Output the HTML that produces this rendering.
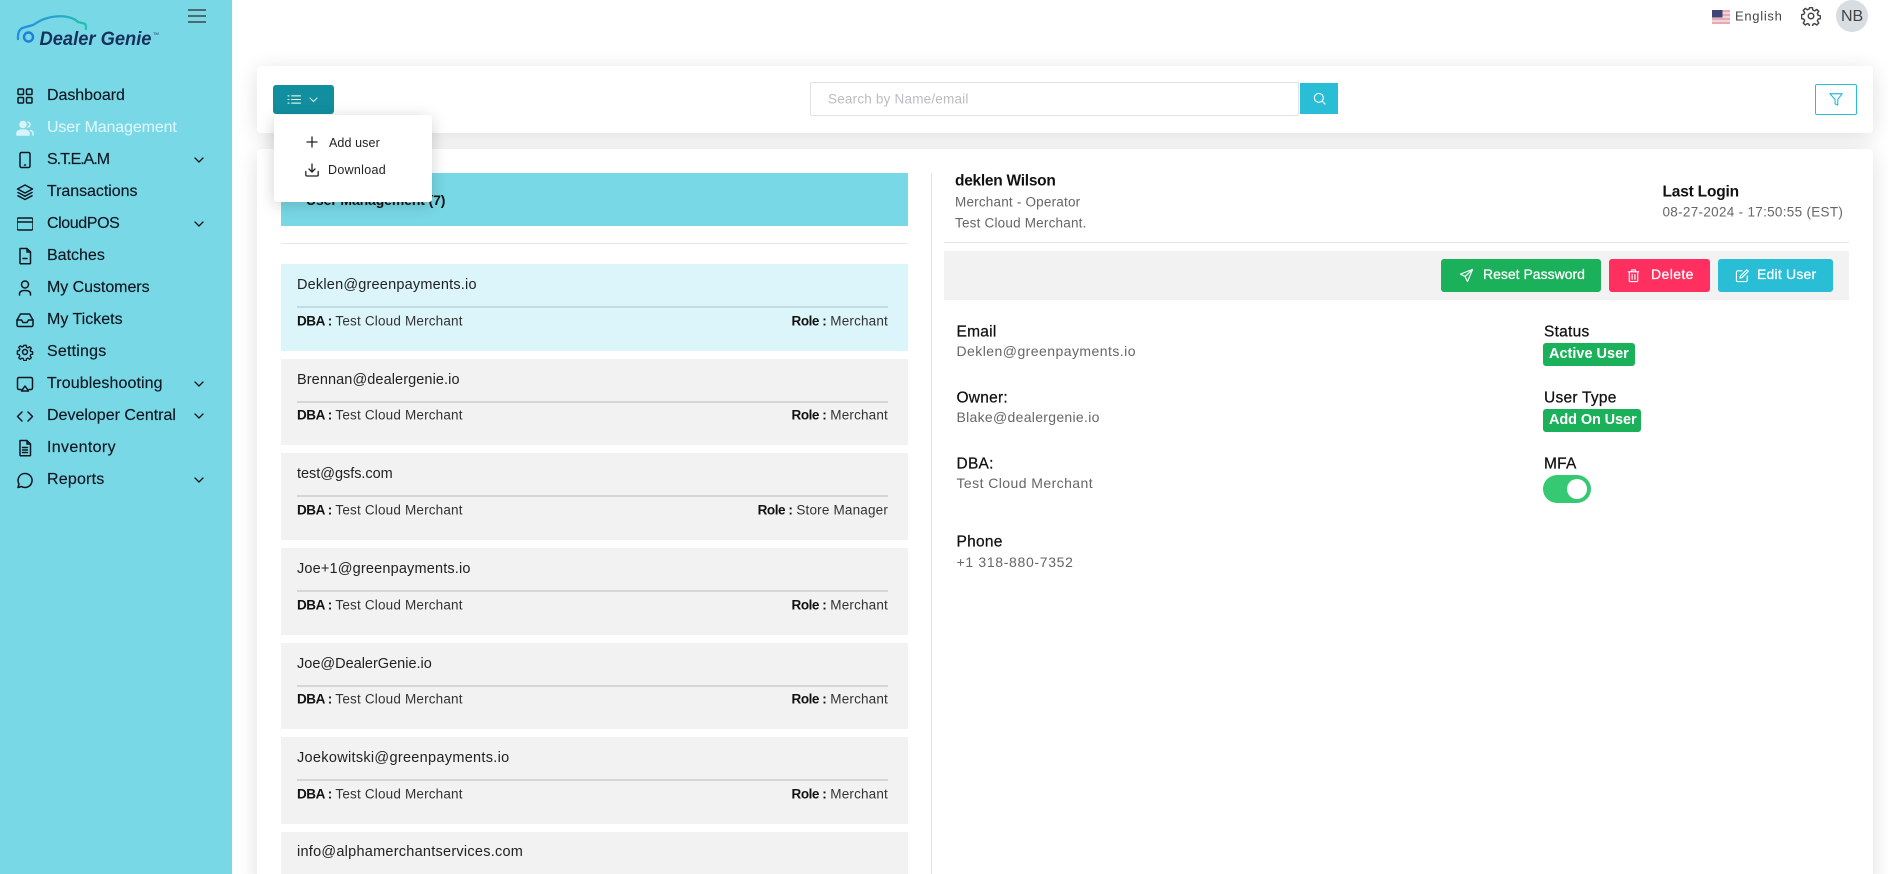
<!DOCTYPE html>
<html><head><meta charset="utf-8"><title>User Management</title>
<style>
*{box-sizing:border-box}
html,body{margin:0;padding:0;width:1888px;height:874px;overflow:hidden;background:#fff;font-family:"Liberation Sans",sans-serif;color:#111}
#wrap{position:relative;width:1888px;height:874px;overflow:hidden;background:#fff}
.a{position:absolute}
.t{position:absolute;white-space:nowrap;line-height:1;transform:translateY(-50%)}
#side{left:0;top:0;width:232px;height:874px;background:#78d8e6}
.nav{font-size:16px;left:47px;color:#0f1720;-webkit-text-stroke:.15px #0f1720}
.ic{position:absolute;left:16px;width:18px;height:18px;fill:none;stroke:#0f1720;stroke-width:1.5;stroke-linecap:round;stroke-linejoin:round}
.chev{position:absolute;left:194px;width:10px;height:6px;fill:none;stroke:#0f1720;stroke-width:1.3;stroke-linecap:round;stroke-linejoin:round}
.card{background:#fff;border-radius:4px;box-shadow:0 4px 22px rgba(0,0,0,.13)}
.item{position:absolute;left:281px;width:627px;background:#f2f2f2}
.item.on{background:#dbf5fa}
.item i{position:absolute;left:16px;right:20px;top:42px;height:2px;background:#d6d6d6}
.item.on i{background:#c2dde2}
.mail{font-size:14.5px;letter-spacing:.25px;left:297px;color:#222}
.sm{font-size:13.5px;color:#333;letter-spacing:.18px}
.sm b{color:#111;letter-spacing:-.45px}
.lb{font-size:15.5px;color:#111;letter-spacing:.25px;-webkit-text-stroke:.25px #111}
.val{font-size:14px;color:#666;letter-spacing:.43px}
.btn{position:absolute;top:259px;height:33px;border-radius:3px;color:#fff}
.btn span{position:absolute;top:15px;transform:translateY(-50%);font-size:14px;white-space:nowrap;line-height:1;-webkit-text-stroke:.25px #fff}
.btn svg{position:absolute;top:9px;width:15px;height:15px;fill:none;stroke:#fff;stroke-width:1.2;stroke-linecap:round;stroke-linejoin:round}
.badge{position:absolute;left:1543px;height:23px;background:#1bb05a;border-radius:3px;color:#fff;font-size:14.5px;font-weight:700;line-height:23px;padding-left:6px;white-space:nowrap}
</style></head><body><div id="wrap">

<div id="side" class="a"></div>

<!-- logo -->
<svg class="a" style="left:16px;top:12px" width="150" height="38" viewBox="0 0 150 38">
<defs><linearGradient id="g" x1="0" x2="1" y1="0" y2="0"><stop offset="0" stop-color="#1f8fe0"/><stop offset=".6" stop-color="#2aa6c8"/><stop offset="1" stop-color="#1fc3ae"/></linearGradient></defs>
<path d="M2 27C1.500 20 4 16.500 8 15.500L17 13C22 10 28 5.500 40 4.500C50 3.500 58 6 62 10L68 11.500C70 12 70 14 70 17" fill="none" stroke="url(#g)" stroke-width="2.300" stroke-linecap="round"/>
<circle cx="12.500" cy="25" r="4.500" fill="none" stroke="#1d7fd6" stroke-width="2.400"/>
<text x="23.500" y="33" font-family="Liberation Sans" font-size="19.500" font-weight="700" font-style="italic" fill="#17305c" textLength="112" lengthAdjust="spacingAndGlyphs">Dealer Genie</text>
<text x="137" y="23" font-family="Liberation Sans" font-size="4" fill="#17305c">TM</text>
</svg>
<!-- hamburger -->
<svg class="a" style="left:187px;top:8px" width="20" height="16"><path d="M1 2H19M1 8H19M1 14H19" stroke="#444" stroke-width="1.600"/></svg>

<!-- nav icons -->
<svg class="ic" style="top:87px" viewBox="0 0 18 18"><rect x="2" y="2" width="5.500" height="5.500" rx="1"/><rect x="10.500" y="2" width="5.500" height="5.500" rx="1"/><rect x="2" y="10.500" width="5.500" height="5.500" rx="1"/><rect x="10.500" y="10.500" width="5.500" height="5.500" rx="1"/></svg>
<svg class="ic" style="top:119px;stroke:#d9f4f8" viewBox="0 0 18 18"><circle cx="7" cy="5.500" r="3" fill="#d9f4f8"/><path d="M1 16v-1.500C1 12 3.500 11 7 11s6 1 6 3.500V16H1z" fill="#d9f4f8"/><path d="M12 3c1.500.5 2 1.500 2 2.500S13.500 7.500 12 8M14.500 11.500c1.800.5 2.500 1.500 2.500 3V16"/></svg>
<svg class="ic" style="top:151px" viewBox="0 0 18 18"><rect x="4" y="1.500" width="10" height="15" rx="1.500"/><path d="M8.500 14h1"/></svg>
<svg class="ic" style="top:183px" viewBox="0 0 18 18"><path d="M9 2L16.500 6 9 10 1.500 6z"/><path d="M2 9.500L9 13.200 16 9.500M2 12.800L9 16.500 16 12.800"/></svg>
<svg class="ic" style="top:215px;left:17px;width:16px" viewBox="0 0 16 18"><rect x="0" y="3" width="16" height="12" rx="1.500"/><path d="M0 7h16"/></svg>
<svg class="ic" style="top:247px" viewBox="0 0 18 18"><path d="M4 1.500h7l3.500 3.500v11a.8.8 0 0 1-.8.8H4.800a.8.8 0 0 1-.8-.8V2.300a.8.8 0 0 1 .8-.8zM11 1.500V5h3.500M7 11.500h4"/></svg>
<svg class="ic" style="top:279px" viewBox="0 0 18 18"><circle cx="9" cy="5.500" r="3.500"/><path d="M3.500 16v-1c0-2.500 2-3.500 5.500-3.500s5.500 1 5.500 3.500v1"/></svg>
<svg class="ic" style="top:311px" viewBox="0 0 18 18"><path d="M4.500 3h9L17 9v5a1.500 1.500 0 0 1-1.500 1.500h-13A1.500 1.500 0 0 1 1 14V9z"/><path d="M1 9h4.500L7 11.500h4L12.500 9H17"/></svg>
<svg class="ic" style="top:343px" viewBox="0 0 18 18"><circle cx="9" cy="9" r="2.500"/><path d="M7.700 1.500h2.600l.4 2.200 1.600.7 1.900-1.300 1.800 1.800-1.300 1.900.7 1.600 2.100.4v2.600l-2.100.4-.7 1.600 1.300 1.900-1.800 1.800-1.900-1.300-1.600.7-.4 2.200H7.700l-.4-2.200-1.600-.7-1.900 1.300-1.800-1.800 1.300-1.900-.7-1.600-2.100-.4V7.800l2.100-.4.7-1.600-1.300-1.900 1.800-1.800 1.900 1.300 1.600-.7z" transform="translate(.9 .9) scale(.9)"/></svg>
<svg class="ic" style="top:375px" viewBox="0 0 18 18"><path d="M5 14.500H3a1.500 1.500 0 0 1-1.500-1.500V4A1.500 1.500 0 0 1 3 2.500h12A1.500 1.500 0 0 1 16.500 4v9a1.500 1.500 0 0 1-1.500 1.500h-2"/><path d="M9 11l3.500 5h-7z"/></svg>
<svg class="ic" style="top:407px" viewBox="0 0 18 18"><path d="M6 5L1.500 9.500 6 14M12 5l4.500 4.500L12 14"/></svg>
<svg class="ic" style="top:439px" viewBox="0 0 18 18"><path d="M4 1.500h7l3.500 3.500v11a.8.8 0 0 1-.8.8H4.800a.8.8 0 0 1-.8-.8V2.300a.8.8 0 0 1 .8-.8zM11 1.500V5h3.500M6.500 8.500h5M6.500 11h5M6.500 13.500h5"/></svg>
<svg class="ic" style="top:471px" viewBox="0 0 18 18"><path d="M2 16.500l1-3.500a7 7 0 1 1 2.500 2.500z"/></svg>

<!-- nav text -->
<div class="t nav" style="top:95.500px;letter-spacing:-.05px">Dashboard</div>
<div class="t nav" style="top:127.500px;letter-spacing:-.13px;color:#dcf6fa;-webkit-text-stroke:.1px #dcf6fa">User Management</div>
<div class="t nav" style="top:159.500px;letter-spacing:-1px">S.T.E.A.M</div>
<div class="t nav" style="top:191.500px;letter-spacing:-.05px">Transactions</div>
<div class="t nav" style="top:223.500px;letter-spacing:-.4px">CloudPOS</div>
<div class="t nav" style="top:255.500px">Batches</div>
<div class="t nav" style="top:287.500px;letter-spacing:-.05px">My Customers</div>
<div class="t nav" style="top:319.500px">My Tickets</div>
<div class="t nav" style="top:351.500px;letter-spacing:.2px">Settings</div>
<div class="t nav" style="top:383.500px;letter-spacing:.1px">Troubleshooting</div>
<div class="t nav" style="top:415.500px">Developer Central</div>
<div class="t nav" style="top:447.500px;letter-spacing:.35px">Inventory</div>
<div class="t nav" style="top:479.500px;letter-spacing:.2px">Reports</div>
<svg class="chev" style="top:157px" viewBox="0 0 10 6"><path d="M1 1l4 4 4-4"/></svg>
<svg class="chev" style="top:221px" viewBox="0 0 10 6"><path d="M1 1l4 4 4-4"/></svg>
<svg class="chev" style="top:381px" viewBox="0 0 10 6"><path d="M1 1l4 4 4-4"/></svg>
<svg class="chev" style="top:413px" viewBox="0 0 10 6"><path d="M1 1l4 4 4-4"/></svg>
<svg class="chev" style="top:477px" viewBox="0 0 10 6"><path d="M1 1l4 4 4-4"/></svg>

<!-- top right -->
<svg class="a" style="left:1712px;top:10px" width="18" height="14" viewBox="0 0 18 14"><rect width="18" height="14" fill="#f3d5d8"/><path d="M0 1h18M0 5h18M0 9h18M0 13h18" stroke="#d98088" stroke-width="1.100"/><rect width="10.500" height="7.500" fill="#3c4478"/></svg>
<div class="t" style="left:1735px;top:15.500px;font-size:13px;letter-spacing:.7px;color:#444">English</div>
<svg class="a" style="left:1801px;top:6px;fill:none;stroke:#444;stroke-width:1.300;stroke-linejoin:round" width="20" height="20" viewBox="0 0 18 18"><circle cx="9" cy="9" r="2.500"/><path d="M7.700 1.500h2.600l.4 2.200 1.600.7 1.900-1.300 1.800 1.800-1.300 1.900.7 1.600 2.100.4v2.600l-2.100.4-.7 1.600 1.300 1.900-1.800 1.800-1.900-1.300-1.600.7-.4 2.200H7.700l-.4-2.200-1.600-.7-1.900 1.300-1.800-1.800 1.300-1.900-.7-1.600-2.100-.4V7.800l2.100-.4.7-1.600-1.300-1.900 1.800-1.800 1.900 1.300 1.600-.7z"/></svg>
<div class="a" style="left:1836px;top:0;width:32px;height:32px;border-radius:50%;background:#d8dde2"></div>
<div class="t" style="left:1841px;top:16.500px;font-size:16px;color:#444">NB</div>

<!-- top card -->
<div class="a card" style="left:257px;top:66px;width:1616px;height:67px"></div>
<div class="a" style="left:810px;top:82px;width:489px;height:34px;border:1px solid #e0e0ea;border-radius:2px"></div>
<div class="t" style="left:828px;top:98.500px;font-size:13.500px;letter-spacing:.2px;color:#bcbcc2">Search by Name/email</div>
<div class="a" style="left:1300px;top:83px;width:38px;height:31px;background:#29bdd6"></div>
<svg class="a" style="left:1313px;top:92px;fill:none;stroke:#fff;stroke-width:1.200;stroke-linecap:round" width="13" height="13" viewBox="0 0 14 14"><circle cx="6.300" cy="6.300" r="4.800"/><path d="M10 10l3 3"/></svg>
<div class="a" style="left:1815px;top:84px;width:42px;height:31px;border:1px solid #29bdd6;border-radius:2px"></div>
<svg class="a" style="left:1829px;top:92px;fill:none;stroke:#29bdd6;stroke-width:1.300;stroke-linejoin:round" width="14" height="14" viewBox="0 0 16 16"><path d="M1 2h14L10 8.500V15L7 13.500v-5z"/></svg>

<!-- main card -->
<div class="a card" style="left:257px;top:149px;width:1616px;height:740px"></div>
<div class="a" style="left:281px;top:173px;width:627px;height:53px;background:#78d8e6"></div>
<div class="t" style="left:306px;top:200px;font-size:14px;font-weight:700;color:#111;letter-spacing:-.12px">User Management (7)</div>
<div class="a" style="left:281px;top:243px;width:627px;height:1px;background:#e6e6e6"></div>
<div class="a" style="left:931px;top:173px;width:1px;height:701px;background:#e2e2e2"></div>

<!-- list -->
<div class="item on" style="top:264px;height:87px"><i></i></div>
<div class="item" style="top:359px;height:86px"><i></i></div>
<div class="item" style="top:453px;height:87px"><i></i></div>
<div class="item" style="top:548px;height:87px"><i></i></div>
<div class="item" style="top:643px;height:86px"><i></i></div>
<div class="item" style="top:737px;height:87px"><i></i></div>
<div class="item" style="top:832px;height:60px"></div>

<div class="t mail" style="top:285px;letter-spacing:.2px">Deklen@greenpayments.io</div>
<div class="t sm" style="left:297px;top:320.500px"><b>DBA :</b> Test Cloud Merchant</div>
<div class="t sm" style="right:1000px;top:320.500px"><b>Role :</b> Merchant</div>
<div class="t mail" style="top:380px;letter-spacing:.09px">Brennan@dealergenie.io</div>
<div class="t sm" style="left:297px;top:414.500px"><b>DBA :</b> Test Cloud Merchant</div>
<div class="t sm" style="right:1000px;top:414.500px"><b>Role :</b> Merchant</div>
<div class="t mail" style="top:474px;letter-spacing:-.03px">test@gsfs.com</div>
<div class="t sm" style="left:297px;top:509.500px"><b>DBA :</b> Test Cloud Merchant</div>
<div class="t sm" style="right:1000px;top:509.500px"><b>Role :</b> Store Manager</div>
<div class="t mail" style="top:569px;letter-spacing:.17px">Joe+1@greenpayments.io</div>
<div class="t sm" style="left:297px;top:604.500px"><b>DBA :</b> Test Cloud Merchant</div>
<div class="t sm" style="right:1000px;top:604.500px"><b>Role :</b> Merchant</div>
<div class="t mail" style="top:664px;letter-spacing:0">Joe@DealerGenie.io</div>
<div class="t sm" style="left:297px;top:698.500px"><b>DBA :</b> Test Cloud Merchant</div>
<div class="t sm" style="right:1000px;top:698.500px"><b>Role :</b> Merchant</div>
<div class="t mail" style="top:758px;letter-spacing:.3px">Joekowitski@greenpayments.io</div>
<div class="t sm" style="left:297px;top:793.500px"><b>DBA :</b> Test Cloud Merchant</div>
<div class="t sm" style="right:1000px;top:793.500px"><b>Role :</b> Merchant</div>
<div class="t mail" style="top:852px">info@alphamerchantservices.com</div>

<!-- right header -->
<div class="t" style="left:955px;top:181px;font-size:15.500px;font-weight:700;color:#111;letter-spacing:-.27px">deklen Wilson</div>
<div class="t val" style="left:955px;top:201.500px;font-size:13.500px;letter-spacing:.2px">Merchant - Operator</div>
<div class="t val" style="left:955px;top:222.500px;font-size:13.500px;letter-spacing:.2px">Test Cloud Merchant.</div>
<div class="t" style="left:1662.500px;top:191.500px;font-size:15.500px;font-weight:700;color:#111;letter-spacing:-.2px">Last Login</div>
<div class="t val" style="left:1662.500px;top:212px;font-size:13.500px;letter-spacing:.3px">08-27-2024 - 17:50:55 (EST)</div>
<div class="a" style="left:944px;top:242px;width:905px;height:1px;background:#e6e6ee"></div>
<div class="a" style="left:944px;top:251px;width:905px;height:49px;background:#f2f2f2"></div>

<div class="btn" style="left:1441px;width:160px;background:#1bb05a"><svg style="left:18px" viewBox="0 0 16 16"><path d="M14.500 1.500L1.500 6.500l5 2.500 2.500 5.500zM14.500 1.500L6.500 9"/></svg><span style="left:42px;letter-spacing:0">Reset Password</span></div>
<div class="btn" style="left:1609px;width:101px;background:#ff305f"><svg style="left:17px" viewBox="0 0 16 16"><path d="M2.500 4h11M6 4V2h4v2M3.500 4v9.500a1 1 0 0 0 1 1h7a1 1 0 0 0 1-1V4M6.500 7v5M9.500 7v5"/></svg><span style="left:42px;letter-spacing:.4px">Delete</span></div>
<div class="btn" style="left:1718px;width:115px;background:#29bdd6"><svg style="left:17px" viewBox="0 0 16 16"><path d="M7.500 3H3a1.500 1.500 0 0 0-1.500 1.500v8.500A1.500 1.500 0 0 0 3 14.500h8.500A1.500 1.500 0 0 0 13 13V8.500"/><path d="M12.500 1.800l1.700 1.700L7.500 10.200 5.200 10.800l.6-2.300z"/></svg><span style="left:39px;letter-spacing:.2px">Edit User</span></div>

<!-- details -->
<div class="t lb" style="left:956.500px;top:332px">Email</div>
<div class="t val" style="left:956.500px;top:350.500px;letter-spacing:.45px">Deklen@greenpayments.io</div>
<div class="t lb" style="left:956.500px;top:398px">Owner:</div>
<div class="t val" style="left:956.500px;top:416.500px;letter-spacing:.3px">Blake@dealergenie.io</div>
<div class="t lb" style="left:956.500px;top:464px">DBA:</div>
<div class="t val" style="left:956.500px;top:482.500px">Test Cloud Merchant</div>
<div class="t lb" style="left:956.500px;top:542px">Phone</div>
<div class="t val" style="left:956.500px;top:562px;letter-spacing:.67px">+1 318-880-7352</div>

<div class="t lb" style="left:1544px;top:332px">Status</div>
<div class="badge" style="top:343px;width:92px;letter-spacing:0">Active User</div>
<div class="t lb" style="left:1544px;top:397.500px">User Type</div>
<div class="badge" style="top:409px;width:98px;letter-spacing:-.1px">Add On User</div>
<div class="t lb" style="left:1544px;top:463.500px">MFA</div>
<div class="a" style="left:1543px;top:475px;width:48px;height:28px;border-radius:14px;background:#35c974"></div>
<div class="a" style="left:1567px;top:479px;width:20px;height:20px;border-radius:50%;background:#fff"></div>

<!-- toolbar button + dropdown -->
<div class="a" style="left:273px;top:85px;width:61px;height:29px;background:#118f9f;border-radius:3px"></div>
<svg class="a" style="left:287px;top:94px;fill:none;stroke:#fff;stroke-width:1.100" width="14" height="11" viewBox="0 0 15 12"><path d="M4.500 2H15M4.500 6H15M4.500 10H15M.5 2h2M.5 6h2M.5 10h2"/></svg>
<svg class="a" style="left:309px;top:97px;fill:none;stroke:#fff;stroke-width:1.100;stroke-linecap:round;stroke-linejoin:round" width="9" height="5.500" viewBox="0 0 10 6"><path d="M1 1l4 4 4-4"/></svg>
<div class="a" style="left:274px;top:115px;width:158px;height:87px;background:#fff;border-radius:3px;box-shadow:0 3px 16px rgba(0,0,0,.18)"></div>
<svg class="a" style="left:306px;top:136px;fill:none;stroke:#222;stroke-width:1.300" width="12" height="12" viewBox="0 0 12 12"><path d="M6 .5v11M.5 6h11"/></svg>
<div class="t" style="left:329px;top:142.500px;font-size:12.500px;letter-spacing:.1px;color:#222">Add user</div>
<svg class="a" style="left:305px;top:163px;fill:none;stroke:#222;stroke-width:1.300;stroke-linecap:round;stroke-linejoin:round" width="14" height="14" viewBox="0 0 14 14"><path d="M7 1v7.500M4 6l3 3 3-3M.8 8.500v3.500a1 1 0 0 0 1 1h10.400a1 1 0 0 0 1-1V8.500"/></svg>
<div class="t" style="left:328px;top:169.500px;font-size:12.500px;letter-spacing:.3px;color:#222">Download</div>

</div></body></html>
